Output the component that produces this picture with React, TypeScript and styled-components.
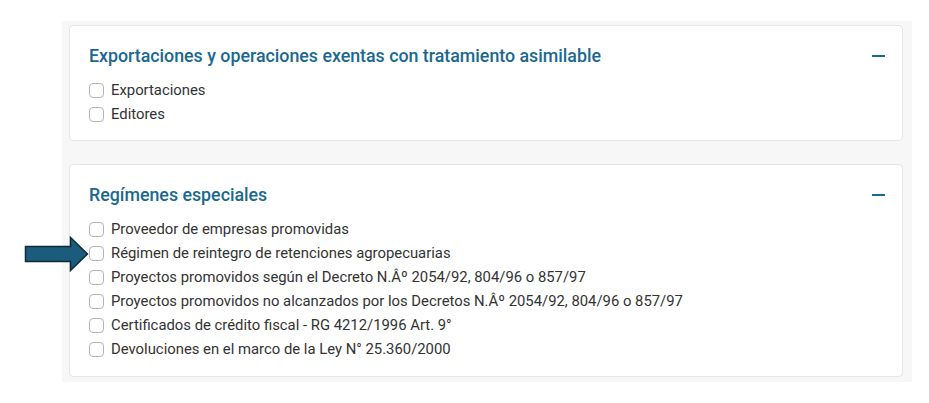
import React from "react";
import styled, { createGlobalStyle } from "styled-components";

const GlobalStyle = createGlobalStyle`
  html, body { margin: 0; padding: 0; background: #ffffff; }
  body { font-family: Roboto, "Liberation Sans", Arial, sans-serif; }
  * { box-sizing: border-box; }
`;

const Page = styled.div`
  position: relative;
  width: 929px;
  height: 403px;
  padding: 21px 17px 0 62px;
`;

const Panel = styled.div`
  width: 850px;
  background: #f7f7f7;
  padding: 4px 9px 5px 7px;
  display: flex;
  flex-direction: column;
  gap: 23px;
`;

const Card = styled.section<{ $bottom: number }>`
  background: #ffffff;
  border: 1px solid #e6e6e6;
  border-radius: 4px;
  padding: 18px 17px ${(p) => p.$bottom}px 19px;
  display: flex;
  flex-direction: column;
  gap: 10px;
`;

const Header = styled.div`
  display: flex;
  align-items: center;
  justify-content: space-between;
  height: 24px;
`;

const Title = styled.h2`
  margin: 0;
  font-family: Roboto, "Liberation Sans", Arial, sans-serif;
  font-size: 17.8px;
  font-weight: 500;
  line-height: 24px;
  color: #1a6890;
`;

const Toggle = styled.button`
  width: 13px;
  height: 24px;
  padding: 0;
  border: 0;
  background: transparent;
  display: flex;
  align-items: center;
  cursor: pointer;
  &::before {
    content: "";
    display: block;
    width: 13px;
    height: 2px;
    background: #1a6890;
  }
`;

const List = styled.ul`
  margin: 0;
  padding: 0;
  list-style: none;
  display: flex;
  flex-direction: column;
`;

const Item = styled.li`
  display: flex;
  align-items: center;
  height: 24px;
  gap: 7px;
  font-size: 14.85px;
  color: #333333;
  line-height: 24px;
`;

const Box = styled.span`
  width: 15px;
  height: 15px;
  border: 1px solid #b5b5b5;
  border-radius: 4px;
  background: #ffffff;
  flex: none;
`;

const Arrow = styled.svg`
  position: absolute;
  left: 24px;
  top: 236px;
`;

const sections = [
  {
    title: "Exportaciones y operaciones exentas con tratamiento asimilable",
    bottom: 14,
    items: ["Exportaciones", "Editores"],
  },
  {
    title: "Regímenes especiales",
    bottom: 15,
    items: [
      "Proveedor de empresas promovidas",
      "Régimen de reintegro de retenciones agropecuarias",
      "Proyectos promovidos según el Decreto N.Âº 2054/92, 804/96 o 857/97",
      "Proyectos promovidos no alcanzados por los Decretos N.Âº 2054/92, 804/96 o 857/97",
      "Certificados de crédito fiscal - RG 4212/1996 Art. 9°",
      "Devoluciones en el marco de la Ley N° 25.360/2000",
    ],
  },
];

export default function App() {
  return (
    <>
      <GlobalStyle />
      <Page>
        <Panel>
          {sections.map((s) => (
            <Card key={s.title} $bottom={s.bottom}>
              <Header>
                <Title>{s.title}</Title>
                <Toggle aria-label="Contraer" />
              </Header>
              <List>
                {s.items.map((it) => (
                  <Item key={it}>
                    <Box />
                    {it}
                  </Item>
                ))}
              </List>
            </Card>
          ))}
        </Panel>
        <Arrow width="66" height="36" viewBox="0 0 66 36">
          <path
            d="M1.5 10.5 H46.5 V1.5 L63.5 18 L46.5 34.5 V25.5 H1.5 Z"
            fill="#1b5b7b"
            stroke="#0e2b3a"
            strokeWidth="1.5"
            strokeLinejoin="miter"
          />
        </Arrow>
      </Page>
    </>
  );
}
